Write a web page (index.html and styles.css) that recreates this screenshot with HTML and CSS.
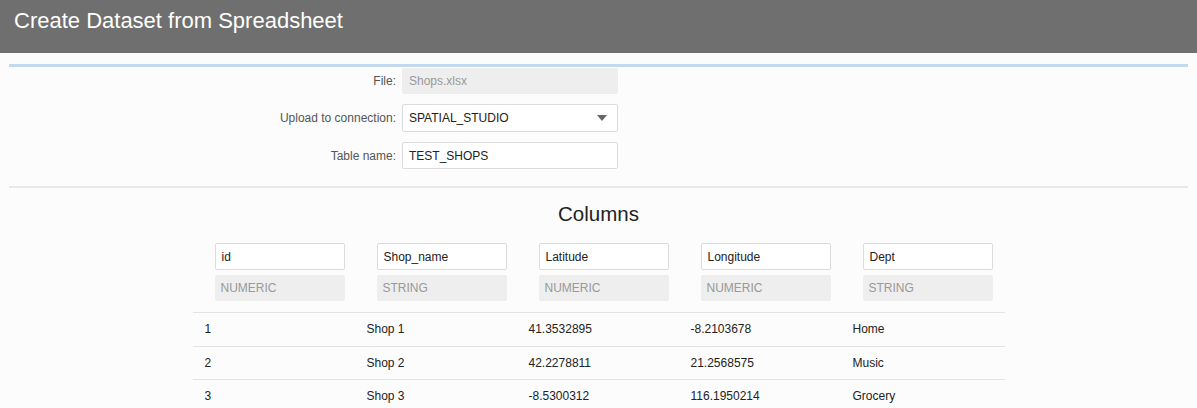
FILE: index.html
```html
<!DOCTYPE html>
<html>
<head>
<meta charset="utf-8">
<link rel="stylesheet" href="styles.css">
</head>
<body>
<header class="topbar"><h1 class="title">Create Dataset from Spreadsheet</h1></header>
<main class="content">
  <section class="form">
    <div class="row">
      <label class="label">File:</label>
      <div class="field disabled">Shops.xlsx</div>
    </div>
    <div class="row">
      <label class="label">Upload to connection:</label>
      <div class="field select">SPATIAL_STUDIO<span class="caret"></span></div>
    </div>
    <div class="row">
      <label class="label">Table name:</label>
      <div class="field">TEST_SHOPS</div>
    </div>
  </section>
  <section class="columns">
    <h2 class="heading">Columns</h2>
    <div class="table">
      <div class="defs">
        <div class="def"><div class="name">id</div><div class="type">NUMERIC</div></div>
        <div class="def"><div class="name">Shop_name</div><div class="type">STRING</div></div>
        <div class="def"><div class="name">Latitude</div><div class="type">NUMERIC</div></div>
        <div class="def"><div class="name">Longitude</div><div class="type">NUMERIC</div></div>
        <div class="def"><div class="name">Dept</div><div class="type">STRING</div></div>
      </div>
      <div class="trow"><span>1</span><span>Shop 1</span><span>41.3532895</span><span>-8.2103678</span><span>Home</span></div>
      <div class="trow"><span>2</span><span>Shop 2</span><span>42.2278811</span><span>21.2568575</span><span>Music</span></div>
      <div class="trow"><span>3</span><span>Shop 3</span><span>-8.5300312</span><span>116.1950214</span><span>Grocery</span></div>
    </div>
  </section>
</main>
</body>
</html>
```
FILE: styles.css
```css
* { box-sizing: border-box; }
html, body { margin: 0; padding: 0; }
body {
  background: #fcfcfc;
  font-family: "Liberation Sans", Arial, sans-serif;
  color: #333;
  font-size: 12px;
  overflow: hidden;
}
.topbar {
  height: 53px;
  background: #6f6f6f;
  padding: 0 14px;
  display: flex;
  align-items: flex-start;
}
.title {
  margin: 8px 0 0;
  font-size: 22px;
  font-weight: normal;
  color: #fff;
  line-height: 26px;
}
.content { margin: 11px 9px 0; }
.form {
  border-top: 3px solid #c2d9ee;
  border-bottom: 2px solid #e8e8e8;
  padding: 1px 0 17px;
  display: flex;
  flex-direction: column;
  gap: 10px;
}
.row { display: flex; align-items: center; gap: 6px; }
.label {
  width: 387px;
  text-align: right;
  color: #555;
  font-size: 12px;
}
.field {
  width: 216px;
  height: 27px;
  border: 1px solid #dcdcdc;
  border-radius: 2px;
  background: #fff;
  padding: 0 6px;
  display: flex;
  align-items: center;
  font-size: 12px;
  color: #222;
}
.field.disabled {
  background: #eeeeee;
  border-color: #eeeeee;
  color: #999;
  height: 26px;
}
.field.select { height: 28px; justify-content: space-between; }
.caret {
  width: 0; height: 0;
  border-left: 5px solid transparent;
  border-right: 5px solid transparent;
  border-top: 6px solid #666;
  margin-right: 4px;
}
.columns { display: flex; flex-direction: column; align-items: center; }
.heading {
  margin: 13px 0 0;
  font-size: 20.5px;
  font-weight: normal;
  color: #222;
  line-height: 26px;
}
.table { width: 812px; margin-top: 16px; }
.defs {
  display: grid;
  grid-template-columns: repeat(5, 162px);
  padding-left: 22px;
  padding-bottom: 11px;
}
.def { width: 130px; display: flex; flex-direction: column; gap: 5px; }
.name {
  height: 27px;
  border: 1px solid #dcdcdc;
  border-radius: 2px;
  background: #fff;
  padding: 0 6px;
  display: flex;
  align-items: center;
  color: #222;
}
.type {
  height: 26px;
  background: #eeeeee;
  border-radius: 2px;
  padding: 0 6px;
  display: flex;
  align-items: center;
  color: #999;
}
.trow {
  display: grid;
  grid-template-columns: repeat(5, 162px);
  height: 33.5px;
  border-top: 1px solid #e3e3e3;
  align-items: center;
  padding-left: 12px;
  color: #222;
}
```
